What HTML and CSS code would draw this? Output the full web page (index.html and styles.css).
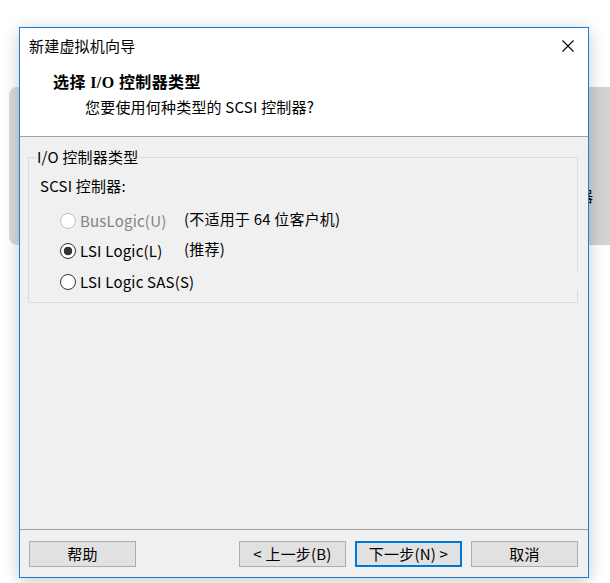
FILE: index.html
```html
<!DOCTYPE html>
<html lang="zh-CN">
<head>
<meta charset="utf-8">
<title>新建虚拟机向导</title>
<link rel="stylesheet" href="styles.css">
</head>
<body>
<div class="desk">
  <div class="bgwin bg-left"></div>
  <div class="bgwin bg-right"><span class="peek">器</span></div>
  <div class="dialog">
    <div class="titlebar">
      <span class="wtitle">新建虚拟机向导</span>
      <svg class="close" width="12" height="12" viewBox="0 0 12 12"><path d="M0.5 0.5 L11.5 11.5 M11.5 0.5 L0.5 11.5" stroke="#000" stroke-width="1.1" fill="none"/></svg>
    </div>
    <div class="header">
      <div class="h-title">选择 I/O 控制器类型</div>
      <div class="h-sub">您要使用何种类型的 SCSI 控制器?</div>
    </div>
    <div class="content">
      <fieldset class="group">
        <legend>I/O 控制器类型</legend>
        <div class="glabel">SCSI 控制器:</div>
        <div class="options">
          <div class="row">
            <span class="radio disabled"></span>
            <span class="opt disabled-text">BusLogic(U)</span>
            <span class="note">(不适用于 64 位客户机)</span>
          </div>
          <div class="row">
            <span class="radio checked"></span>
            <span class="opt">LSI Logic(L)</span>
            <span class="note">(推荐)</span>
          </div>
          <div class="row">
            <span class="radio"></span>
            <span class="opt">LSI Logic SAS(S)</span>
          </div>
          <span class="gapmark"></span>
        </div>
      </fieldset>
    </div>
    <div class="footer">
      <button class="btn">帮助</button>
      <div class="navbtns">
        <button class="btn">&lt; 上一步(B)</button>
        <button class="btn default">下一步(N) &gt;</button>
        <button class="btn">取消</button>
      </div>
    </div>
  </div>
</div>
</body>
</html>
```
FILE: styles.css
```css
html, body {
  margin: 0;
  padding: 0;
  background: #ffffff;
}
body {
  font-family: "Noto Sans CJK SC", sans-serif;
  font-size: 15px;
  letter-spacing: 0.2px;
  color: #000;
}
.desk {
  position: relative;
  width: 610px;
  height: 583px;
  overflow: hidden;
  background: #ffffff;
}
.bgwin {
  position: absolute;
  top: 87px;
  height: 158px;
  background: #d8d8d8;
}
.bg-left {
  left: 9px;
  width: 30px;
  border-radius: 8px 0 0 8px;
  background: #dadada;
}
.bg-right {
  left: 570px;
  width: 60px;
  background: #d3d3d3;
}
.peek {
  position: absolute;
  left: 8px;
  top: 101px;
  line-height: 16px;
  font-size: 15px;
  color: #000;
}
.dialog {
  position: absolute;
  left: 19px;
  top: 27px;
  width: 570px;
  height: 551px;
  box-sizing: border-box;
  border: 1px solid #1c7fd6;
  background: #fff;
  box-shadow: 0 3px 16px rgba(0, 0, 0, 0.22);
  display: flex;
  flex-direction: column;
}
.titlebar {
  height: 36px;
  display: flex;
  align-items: center;
  justify-content: space-between;
  padding: 0 14px 0 9px;
}
.wtitle {
  font-size: 15px;
  line-height: 20px;
}
.close {
  display: block;
}
.header {
  height: 63px;
  border-bottom: 1px solid #a0a0a0;
  padding: 9px 0 0 33px;
}
.h-title {
  font-family: "Liberation Serif", "Noto Sans CJK SC", serif;
  font-weight: bold;
  font-size: 16px;
  letter-spacing: 0.4px;
  line-height: 20px;
}
.h-sub {
  margin-top: 4px;
  padding-left: 32px;
  line-height: 20px;
}
.content {
  flex: 1;
  background: #f0f0f0;
  padding: 12px 10px 0 8px;
}
.group {
  margin: 0;
  padding: 0 0 6px 0;
  border: 1px solid #dcdcdc;
  min-width: 0;
}
.group legend {
  margin-left: 7px;
  padding: 0 1px;
  line-height: 16px;
}
.glabel {
  margin-top: 11px;
  padding-left: 11px;
  line-height: 20px;
}
.options {
  position: relative;
  margin-top: 10px;
}
.row {
  height: 30px;
  display: grid;
  grid-template-columns: 31px 16px 4px 104px auto;
  align-items: center;
}
.row:last-of-type {
  padding-top: 2px;
  box-sizing: border-box;
}
.radio {
  grid-column: 2;
  width: 16px;
  height: 16px;
  box-sizing: border-box;
  border-radius: 50%;
  border: 1px solid #333333;
  background: #ffffff;
}
.radio.checked {
  background: radial-gradient(circle, #333333 0 4px, #ffffff 4.6px);
}
.radio.disabled {
  border-color: #c4c4c4;
  background: #ffffff;
}
.opt {
  grid-column: 4;
  line-height: 20px;
  white-space: nowrap;
}
.disabled-text {
  color: #838383;
}
.note {
  grid-column: 5;
  line-height: 20px;
  white-space: nowrap;
  margin-top: -4px;
}
.gapmark {
  position: absolute;
  right: -1px;
  top: 66px;
  width: 1px;
  height: 18px;
  background: #f0f0f0;
}
.footer {
  border-top: 1px solid #a0a0a0;
  background: #f0f0f0;
  padding: 11px 10px 10px 9px;
  display: flex;
  justify-content: space-between;
}
.navbtns {
  display: flex;
  gap: 9px;
}
.btn {
  width: 107px;
  height: 26px;
  box-sizing: border-box;
  margin: 0;
  padding: 0;
  border: 1px solid #adadad;
  background: #e1e1e1;
  font-family: "Noto Sans CJK SC", sans-serif;
  font-size: 15px;
  letter-spacing: 0.2px;
  line-height: 22px;
  color: #000;
}
.btn.default {
  border: 2px solid #0078d7;
}
```
